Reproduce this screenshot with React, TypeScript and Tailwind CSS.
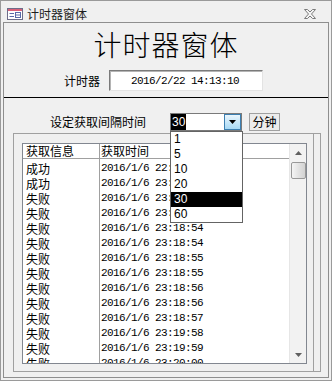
import React from "react";

const rows: [string, string][] = [
  ["成功", "2016/1/6 22:59:10"],
  ["成功", "2016/1/6 23:18:52"],
  ["失败", "2016/1/6 23:18:52"],
  ["失败", "2016/1/6 23:18:53"],
  ["失败", "2016/1/6 23:18:54"],
  ["失败", "2016/1/6 23:18:54"],
  ["失败", "2016/1/6 23:18:55"],
  ["失败", "2016/1/6 23:18:55"],
  ["失败", "2016/1/6 23:18:56"],
  ["失败", "2016/1/6 23:18:56"],
  ["失败", "2016/1/6 23:18:57"],
  ["失败", "2016/1/6 23:19:58"],
  ["失败", "2016/1/6 23:19:59"],
  ["失败", "2016/1/6 23:20:00"],
];

const options = ["1", "5", "10", "20", "30", "60"];

function FormIcon() {
  return (
    <svg width="16" height="12" viewBox="0 0 16 12">
      <rect x="0.5" y="0.5" width="15" height="11" fill="#ffffff" stroke="#6d6d8a" />
      <rect x="1" y="1" width="14" height="2" fill="#d9607a" />
      <line x1="2.5" y1="5.5" x2="7" y2="5.5" stroke="#5a6aa8" />
      <line x1="2.5" y1="8.5" x2="7" y2="8.5" stroke="#5a6aa8" />
      <rect x="8.5" y="4.5" width="5" height="5" fill="none" stroke="#5a6aa8" />
      <line x1="9" y1="7" x2="13" y2="7" stroke="#5a6aa8" />
    </svg>
  );
}

function CloseIcon() {
  return (
    <svg width="12" height="10" viewBox="0 0 12 10">
      <polygon
        points="0.5,0.5 3.5,0.5 6,3 8.5,0.5 11.5,0.5 7.5,5 11.5,9.5 8.5,9.5 6,7 3.5,9.5 0.5,9.5 4.5,5"
        fill="#f4f4f4"
        stroke="#7b7b7b"
        strokeWidth="1"
      />
    </svg>
  );
}

export default function App() {
  return (
    <div className="w-[332px] h-[381px] bg-[#f0f0f0] border border-[#9a9a9a] flex flex-col overflow-hidden text-black font-['Noto_Sans_CJK_SC',sans-serif]">
      {/* title bar */}
      <div className="h-[21px] shrink-0 flex items-center pl-[6px] pr-[15px] pt-[4px]">
        <FormIcon />
        <span className="ml-[4px] text-[12px] leading-[12px] text-[#1e1e1e]">计时器窗体</span>
        <div className="ml-auto">
          <CloseIcon />
        </div>
      </div>

      {/* body */}
      <div className="mx-[2px] mb-[2px] flex-1 min-h-0 border border-[#8e8e8e] flex flex-col bg-[#f0f0f0]">
        {/* header section */}
        <div className="h-[74px] shrink-0 flex flex-col">
          <div className="mt-[7px] h-[28px] leading-[28px] text-[28px] font-light text-center tracking-[1px]">计时器窗体</div>
          <div className="mt-[12px] ml-[60px] flex items-center">
            <span className="text-[12px] leading-[12px]">计时器</span>
            <div className="ml-[9px] w-[154px] h-[21px] bg-white border border-[#7a7a7a] border-b-[#e3e3e3] border-r-[#e3e3e3] shadow-[inset_1px_1px_0_#b4b4b4] flex items-center justify-center">
              <span className="font-['Liberation_Mono',monospace] text-[11px] tracking-[-0.6px] leading-[12px] pr-[2px]">2016/2/22 14:13:10</span>
            </div>
          </div>
        </div>
        <div className="h-px shrink-0 bg-black" />

        {/* detail section */}
        <div className="flex-1 min-h-0 relative flex flex-col">
          <div className="shrink-0 pt-[15px] pl-[46px] flex items-center">
            <span className="w-[96px] text-[12px] leading-[12px]">设定获取间隔时间</span>
            <div className="ml-[24px] w-[72px] h-[18px] bg-white border border-[#7a7a7a] flex items-stretch">
              <div className="flex-1 flex items-center">
                <span className="bg-black text-white h-full flex items-center px-[1px] font-['Liberation_Sans',sans-serif] text-[12px]">30</span>
              </div>
              <div className="w-[17px] border border-[#3c7fb1] bg-[linear-gradient(#eaf6fd,#a7d9f5)] flex items-center justify-center">
                <svg width="7" height="4" viewBox="0 0 7 4">
                  <polygon points="0,0 7,0 3.5,4" fill="#000" />
                </svg>
              </div>
            </div>
            <div className="ml-[7px] w-[31px] h-[18px] border border-[#a0a0a0] bg-[#ececec] flex items-center justify-center text-[12px] leading-[12px]">
              分钟
            </div>
          </div>

          {/* subform frame */}
          <div className="ml-[9px] mt-[2px] mb-[5px] flex-1 min-h-0 w-[308px] border border-[#a0a0a0] flex">
            <div className="w-[300px] border-r border-[#a0a0a0] pt-[9px] pl-[8px] pb-[7px] flex flex-col">
              {/* list box */}
              <div className="flex-1 min-h-0 w-[285px] border border-[#828790] bg-white flex overflow-hidden">
                <div className="flex-1 flex overflow-hidden">
                  <div className="w-[77px] shrink-0 border-r border-[#a0a0a0] flex flex-col">
                    <div className="h-[15px] shrink-0 border-b border-[#a0a0a0] pl-[3px] text-[12px] leading-[14px]">获取信息</div>
                    <div className="pt-[2px] shrink-0">
                      {rows.map((r, i) => (
                        <div key={i} className="h-[15px] pl-[3px] text-[12px] leading-[15px]">{r[0]}</div>
                      ))}
                    </div>
                  </div>
                  <div className="flex-1 flex flex-col">
                    <div className="h-[15px] shrink-0 border-b border-[#a0a0a0] pl-[1px] text-[12px] leading-[14px]">获取时间</div>
                    <div className="pt-[2px] shrink-0">
                      {rows.map((r, i) => (
                        <div key={i} className="h-[15px] pl-[1px] font-['Liberation_Mono',monospace] text-[11px] tracking-[-0.6px] leading-[15px]">{r[1]}</div>
                      ))}
                    </div>
                  </div>
                </div>
                {/* scrollbar */}
                <div className="w-[17px] shrink-0 bg-[#f2f2f2] border-l border-[#e6e6e6] flex flex-col items-center">
                  <div className="h-[17px] shrink-0 flex items-center justify-center">
                    <svg width="7" height="4" viewBox="0 0 7 4">
                      <polygon points="3.5,0 7,4 0,4" fill="#606060" />
                    </svg>
                  </div>
                  <div className="w-[15px] h-[17px] shrink-0 mt-[1px] border border-[#989898] rounded-[2px] bg-[linear-gradient(90deg,#f4f4f4,#e2e2e2_50%,#d2d2d2)]" />
                  <div className="flex-1" />
                  <div className="h-[17px] shrink-0 flex items-center justify-center">
                    <svg width="7" height="4" viewBox="0 0 7 4">
                      <polygon points="0,0 7,0 3.5,4" fill="#606060" />
                    </svg>
                  </div>
                </div>
              </div>
            </div>
          </div>

          {/* dropdown list */}
          <div className="absolute left-[166px] top-[33px] w-[73px] h-[92px] bg-white border border-[#646464]">
            {options.map((o) => (
              <div
                key={o}
                className={
                  o === "30"
                    ? "h-[15px] pl-[3px] bg-black text-white font-['Liberation_Sans',sans-serif] text-[12px] leading-[15px]"
                    : "h-[15px] pl-[3px] font-['Liberation_Sans',sans-serif] text-[12px] leading-[15px]"
                }
              >
                {o}
              </div>
            ))}
          </div>
        </div>
      </div>
    </div>
  );
}
